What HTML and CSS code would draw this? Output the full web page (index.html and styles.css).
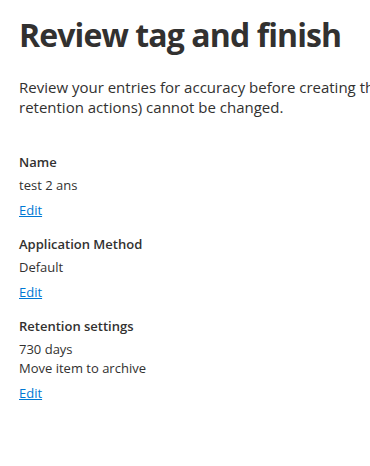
FILE: index.html
```html
<!DOCTYPE html>
<html>
<head>
<meta charset="utf-8">
<link rel="stylesheet" href="styles.css">
</head>
<body>
<main class="page">
  <h1 class="title">Review tag and finish</h1>
  <p class="intro">Review your entries for accuracy before creating the tag. Some settings (such as<br>retention actions) cannot be changed.</p>
  <section class="field">
    <div class="label">Name</div>
    <div class="value">test 2 ans</div>
    <a class="edit" href="#">Edit</a>
  </section>
  <section class="field">
    <div class="label">Application Method</div>
    <div class="value">Default</div>
    <a class="edit" href="#">Edit</a>
  </section>
  <section class="field">
    <div class="label">Retention settings</div>
    <div class="value">730 days<br>Move item to archive</div>
    <a class="edit" href="#">Edit</a>
  </section>
</main>
</body>
</html>
```

FILE: styles.css
```css
html, body {
  margin: 0;
  padding: 0;
  background: #ffffff;
  overflow: hidden;
}
.page {
  width: 800px;
  padding: 13px 0 0 19px;
  font-family: "Open Sans", "Noto Sans", sans-serif;
  color: #323130;
}
.title {
  margin: 0;
  font-size: 32px;
  line-height: 44px;
  font-weight: 700;
  letter-spacing: -0.9px;
}
.intro {
  margin: 20px 0 0 0;
  font-size: 15px;
  line-height: 20px;
  white-space: nowrap;
}
.field {
  display: flex;
  flex-direction: column;
  align-items: flex-start;
  gap: 4px;
  margin-top: 35px;
  font-size: 13px;
  line-height: 20px;
}
.field + .field {
  margin-top: 14px;
}
.label {
  font-weight: 600;
}
.value {
  line-height: 19px;
}
.edit {
  color: #0078d4;
  text-decoration: underline;
  padding-top: 1px;
}
```
